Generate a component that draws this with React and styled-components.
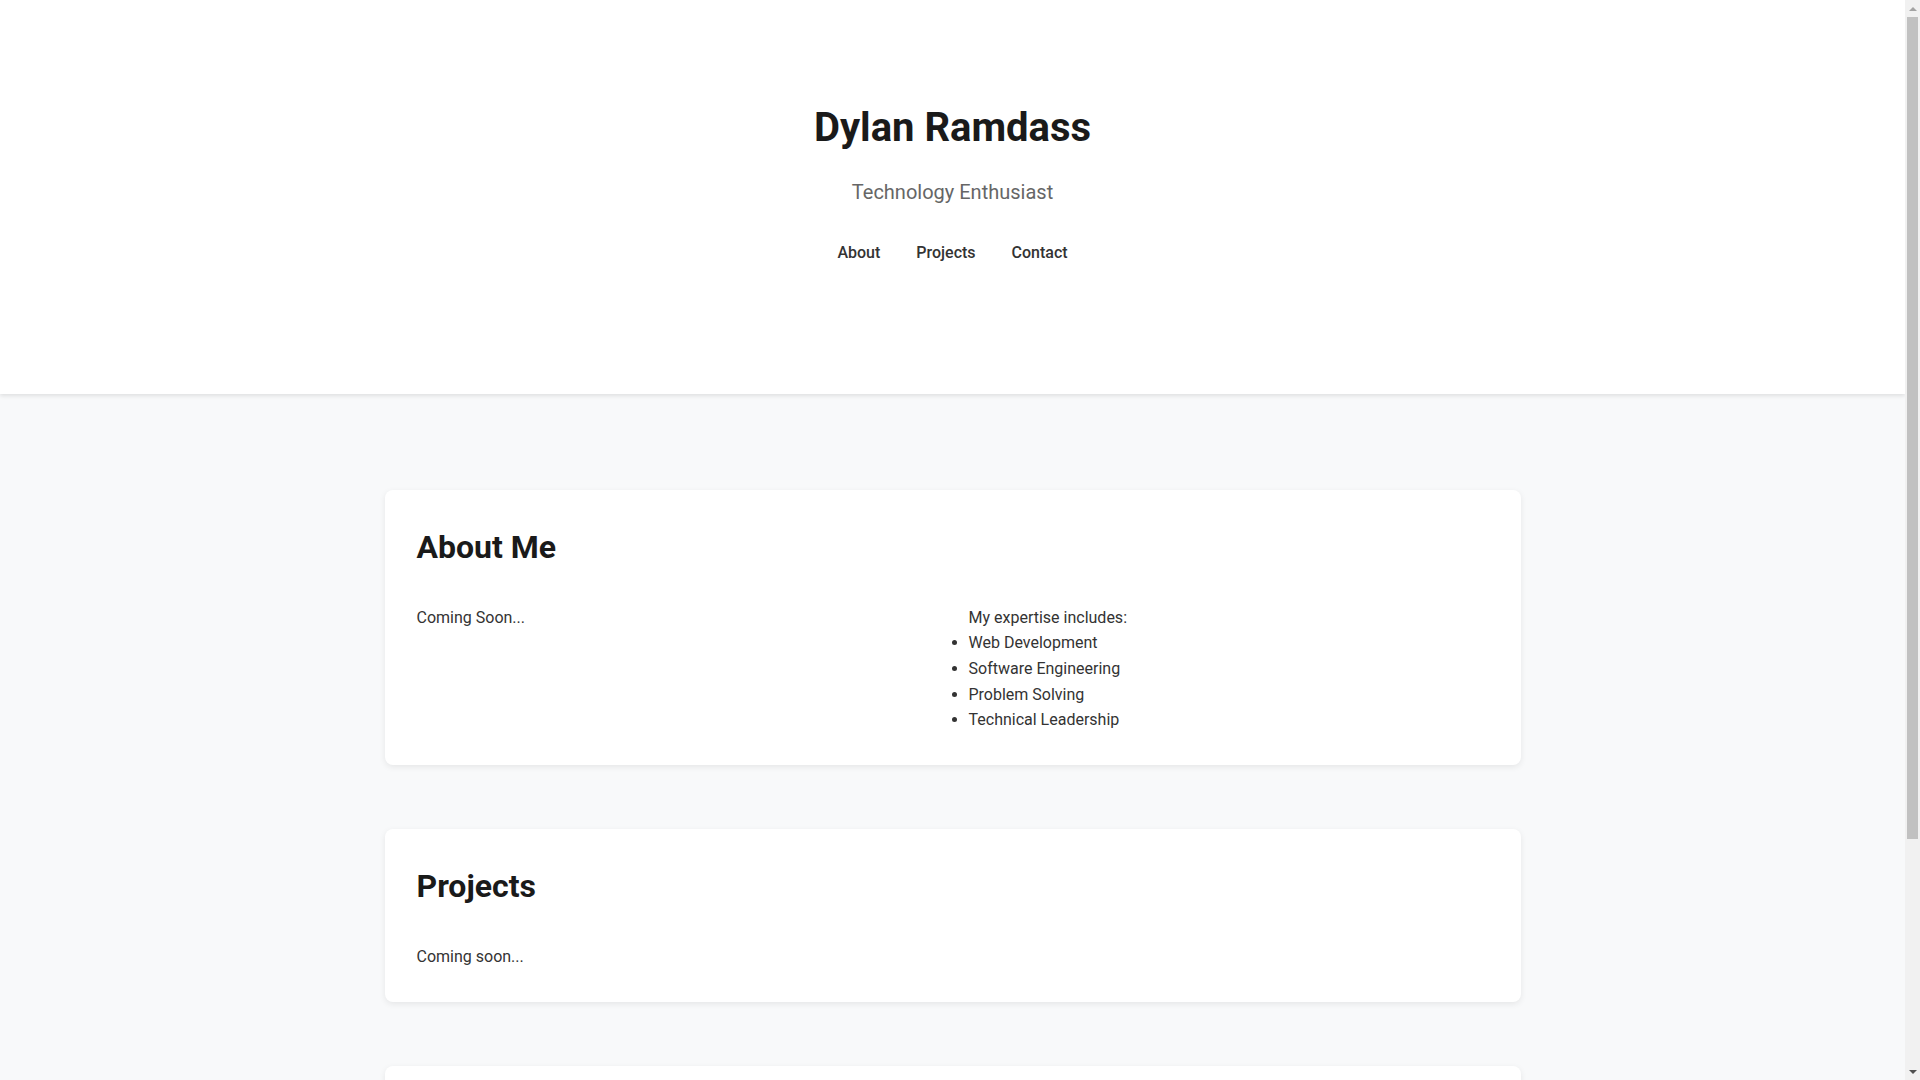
import React from "react";
import styled, { createGlobalStyle } from "styled-components";

const GlobalStyle = createGlobalStyle`
  * { box-sizing: border-box; }
  html, body { margin: 0; padding: 0; }
  body {
    font-family: Roboto, "Liberation Sans", Arial, sans-serif;
    font-size: 16px;
    line-height: 1.6;
    color: #333;
    background: #f8f9fa;
    margin-right: 15px;
  }
`;

const Page = styled.div`
  min-height: 1374px;
`;

const Header = styled.header`
  background: #fff;
  text-align: center;
  padding: 104px 2rem 128px;
  box-shadow: 0 2px 4px rgba(0, 0, 0, 0.1);
`;

const Title = styled.h1`
  margin: 0 0 24px;
  font-size: 2.5rem;
  line-height: 1.2;
  font-weight: 700;
  color: #1a1a1a;
`;

const Subtitle = styled.p`
  margin: 0 0 32px;
  font-size: 1.25rem;
  color: #666;
`;

const Nav = styled.nav`
  display: flex;
  justify-content: center;
  gap: 36px;
`;

const NavLink = styled.a`
  color: #333;
  font-weight: 500;
  text-decoration: none;
  cursor: pointer;
`;

const Main = styled.main`
  max-width: 1200px;
  margin: 0 auto;
  padding: 96px 2rem 4rem;
  display: flex;
  flex-direction: column;
  gap: 4rem;
`;

const Card = styled.section`
  background: #fff;
  border-radius: 8px;
  padding: 2rem;
  box-shadow: 0 2px 6px rgba(0, 0, 0, 0.08);
`;

const CardTitle = styled.h2`
  margin: 0 0 2rem;
  font-size: 2rem;
  font-weight: 700;
  color: #1a1a1a;
`;

const Grid = styled.div`
  display: grid;
  grid-template-columns: 1fr 1fr;
  gap: 2rem;
`;

const Text = styled.p`
  margin: 0;
`;

const List = styled.ul`
  margin: 0;
  padding: 0;
`;

/* drawing of the window's scroll bar, lying over the page edge */
const ScrollTrack = styled.div`
  position: fixed;
  top: 0;
  right: 0;
  width: 15px;
  height: 100vh;
  background: #f1f1f1;
  display: flex;
  flex-direction: column;
  align-items: center;
`;

const Arrow = styled.div`
  flex: 0 0 17px;
  width: 15px;
  display: flex;
  align-items: center;
  justify-content: center;
  &::before {
    content: "";
    width: 0;
    height: 0;
    border-left: 4px solid transparent;
    border-right: 4px solid transparent;
    ${(p) =>
      p.$down
        ? "border-top: 4px solid #505050;"
        : "border-bottom: 4px solid #a3a3a3;"}
  }
`;

const Thumb = styled.div`
  width: 11px;
  height: 822px;
  background: #c1c1c1;
`;

const Spacer = styled.div`
  flex: 1;
`;

const expertise = [
  "Web Development",
  "Software Engineering",
  "Problem Solving",
  "Technical Leadership",
];

export default function App() {
  return (
    <>
      <GlobalStyle />
      <Page>
        <Header>
          <Title>Dylan Ramdass</Title>
          <Subtitle>Technology Enthusiast</Subtitle>
          <Nav>
            <NavLink href="#about">About</NavLink>
            <NavLink href="#projects">Projects</NavLink>
            <NavLink href="#contact">Contact</NavLink>
          </Nav>
        </Header>
        <Main>
          <Card id="about">
            <CardTitle>About Me</CardTitle>
            <Grid>
              <div>
                <Text>Coming Soon...</Text>
              </div>
              <div>
                <Text>My expertise includes:</Text>
                <List>
                  {expertise.map((item) => (
                    <li key={item}>{item}</li>
                  ))}
                </List>
              </div>
            </Grid>
          </Card>
          <Card id="projects">
            <CardTitle>Projects</CardTitle>
            <Text>Coming soon...</Text>
          </Card>
          <Card id="contact">
            <CardTitle>Contact</CardTitle>
            <Text>Coming soon...</Text>
          </Card>
        </Main>
      </Page>
      <ScrollTrack aria-hidden="true">
        <Arrow />
        <Thumb />
        <Spacer />
        <Arrow $down />
      </ScrollTrack>
    </>
  );
}
